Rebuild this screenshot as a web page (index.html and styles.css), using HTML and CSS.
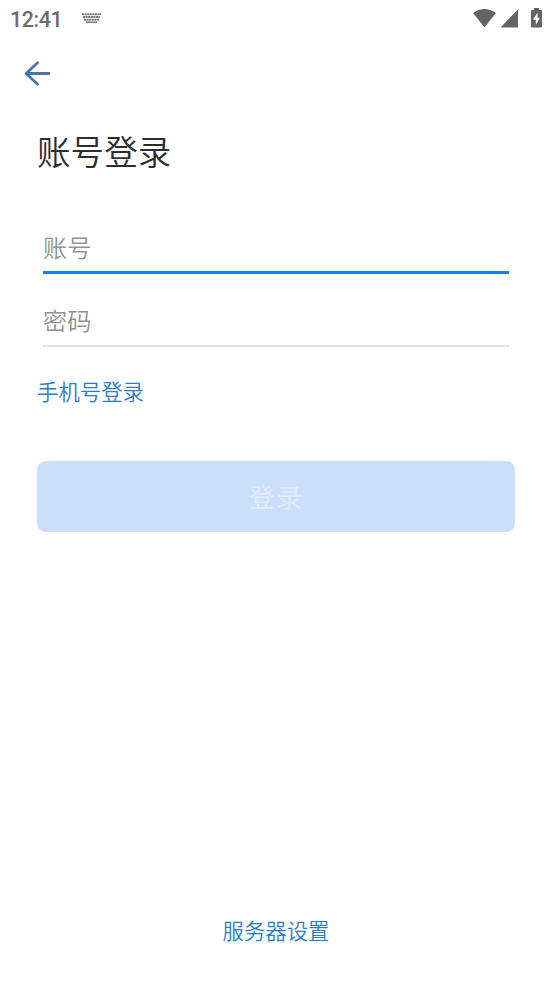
FILE: index.html
```html
<!DOCTYPE html>
<html lang="zh-CN">
<head>
<meta charset="utf-8">
<title>账号登录</title>
<link rel="stylesheet" href="styles.css">
</head>
<body>
<div class="screen">
  <header class="status">
    <span class="clock">12:41</span>
    <svg class="keyboard" width="19" height="11" viewBox="0 0 19 11">
      <path d="M0 1.200h19M1 4h17M2 6.700h15" stroke-width="1.900" stroke-dasharray="2.100 .5"/>
      <path d="M4 9.300h11" stroke-width="1.500"/>
    </svg>
    <svg class="signals" width="71" height="22" viewBox="0 0 71 22">
      <path d="M1 5Q12.500-3 24 5L12.500 19.200z"/>
      <path d="M46 1.500V19.500H28.500z"/>
      <path d="M62 0h5v2h2q1 0 1 1v15.500q0 1-1 1h-9q-1 0-1-1V3q0-1 1-1h2z"/>
      <path class="bolt" d="M65.500 4.500L61 11.800h2.800v5.200L68 9.700h-2.500z"/>
    </svg>
  </header>
  <nav class="nav">
    <button class="back" aria-label="返回">
      <svg width="28" height="28" viewBox="0 0 28 28"><path d="M14.500 2.700L3.200 13.500 14.500 24.300M3.500 13.500H26"/></svg>
    </button>
  </nav>
  <main class="login">
    <h1>账号登录</h1>
    <div class="field active"><span>账号</span></div>
    <div class="field"><span>密码</span></div>
    <a class="link">手机号登录</a>
    <button class="submit">登录</button>
  </main>
  <footer><a class="link">服务器设置</a></footer>
</div>
</body>
</html>
```
FILE: styles.css
```css
* { box-sizing: border-box; }
body { margin: 0; background: #fff; font-family: "Noto Sans CJK SC", sans-serif; font-weight: 350; }
button { border: 0; padding: 0; background: none; font-family: inherit; }
svg { display: block; }
.screen { height: 983px; display: flex; flex-direction: column; }
.status { display: flex; align-items: center; height: 38px; padding: 0 9px 0 10px; }
.clock { font: 500 21.500px/38px Roboto, sans-serif; color: #6c6c6c; letter-spacing: -0.450px; width: 72px; padding-top: 1px; }
.keyboard { fill: none; stroke: #777; margin-top: -1px; }
.signals { margin-left: auto; fill: #646464; margin-top: -1px; }
.signals .bolt { fill: #fff; }
.nav { height: 72px; padding: 22px 0 0 23px; }
.back { display: block; }
.back path { fill: none; stroke: #4b72aa; stroke-width: 2.8; stroke-linecap: round; stroke-linejoin: round; }
.login { padding: 17px 37px 0; }
h1 { margin: 0 0 48px; font-size: 33.600px; line-height: 48px; font-weight: 350; color: #2c2e32; }
.field { height: 73px; margin: 0 6px; padding-top: 28px; font-size: 24.200px; line-height: 36px; color: #929292; border-bottom: 2px solid #e1e1e1; }
.field.active { height: 51px; padding-top: 6px; border-bottom: 3px solid #1681e3; }
.link { display: block; font-size: 21.400px; line-height: 32px; color: #2c7bca; }
.login .link { margin-top: 28px; }
.submit { display: block; width: 478px; height: 71px; margin-top: 54px; padding: 0 0 2px 1px; border-radius: 9px; background: #cbdffb; color: #e0edfd; font-size: 25.500px; font-weight: 400; letter-spacing: 2px; }
footer { margin: auto 0 37px; text-align: center; }
```
